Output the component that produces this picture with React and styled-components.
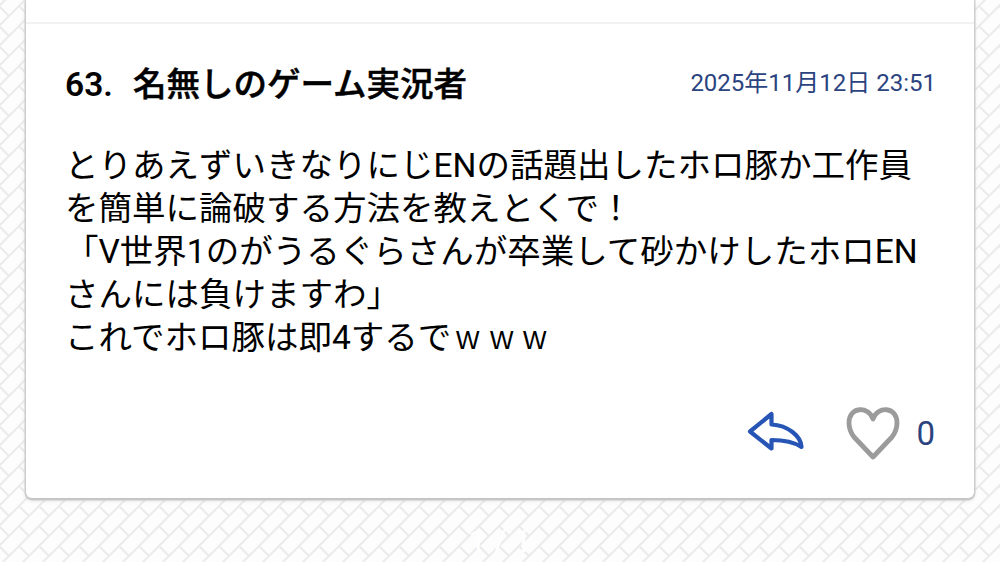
import React from 'react';
import styled, { createGlobalStyle } from 'styled-components';

const lines = [
    'とりあえずいきなりにじENの話題出したホロ豚か工作員',
    'を簡単に論破する方法を教えとくで！',
    '「V世界1のがうるぐらさんが卒業して砂かけしたホロEN',
    'さんには負けますわ」',
    'これでホロ豚は即4するでｗｗｗ'
];

// full-width w is drawn narrower than its cell
const renderLine = line => line.split(/(ｗ)/).map((part, i) => (
    part === 'ｗ' ? <Laugh key={i}>{part}</Laugh> : part
));

const BrickBackground = () => (
    <Backdrop aria-hidden="true">
        <defs>
            <pattern id="bricks" width="20" height="20" x="-1" y="6" patternUnits="userSpaceOnUse">
                <path
                    d="M-2 22L22 -2M0 0L10 10M-1 1L1 -1M19 21L21 19"
                    fill="none"
                    stroke="#ebebeb"
                    strokeWidth="2"
                />
            </pattern>
        </defs>
        <rect width="100%" height="100%" fill="url(#bricks)" />
    </Backdrop>
);

const App = () => (
    <Page>
        <GlobalStyle />
        <BrickBackground />
        <Card>
            <Previous />
            <Comment>
                <Header>
                    <Name><Number>63.</Number>名無しのゲーム実況者</Name>
                    <Posted>2025年11月12日 23:51</Posted>
                </Header>
                <Body>
                    {lines.map((line, i) => <Line key={i}>{renderLine(line)}</Line>)}
                </Body>
                <Actions>
                    <ReplyIcon viewBox="0 0 58 40">
                        <path d="M3 20.5L24.5 3V13.5C41 14.5 54 25 54.5 36C47 31 37 29 24.5 29V37.5Z" />
                    </ReplyIcon>
                    <HeartIcon viewBox="0 0 54 54">
                        <path d="M27 13C23 0 3 0 3 17C3 23 5 27 8 31L27 51L46 31C49 27 51 23 51 17C51 0 31 0 27 13Z" />
                    </HeartIcon>
                    <Likes>0</Likes>
                </Actions>
            </Comment>
        </Card>
        <PageCount>1 / 1</PageCount>
    </Page>
);

const GlobalStyle = createGlobalStyle`
    body {
        margin: 0;
        overflow: hidden;
        background: #fdfdfd;
        font-family: Roboto, "Noto Sans CJK JP", sans-serif;
    }
`

const Page = styled.div`
    position: relative;
    box-sizing: border-box;
    width: 1000px;
    height: 562px;
    padding: 0 26px;
    overflow: hidden;
`

const Backdrop = styled.svg`
    position: absolute;
    top: 0;
    left: 0;
    width: 100%;
    height: 100%;
`

const Card = styled.div`
    position: relative;
    height: 498px;
    background: #fff;
    border-radius: 0 0 6px 6px;
    box-shadow: 0 2px 5px rgba(0, 0, 0, 0.14), 0 1px 0 1.5px #dadada;
`

const Previous = styled.div`
    height: 22px;
    border-bottom: 2px solid #f2f2f2;
`

const Comment = styled.div`
    padding: 40px 39px 0 39px;
`

const Header = styled.div`
    display: flex;
    justify-content: space-between;
    height: 80px;
`

const Name = styled.div`
    color: #000;
    font-size: 33.5px;
    font-weight: 500;
    line-height: 42px;
    -webkit-text-stroke: 0.5px #000;
`

const Number = styled.span`
    display: inline-block;
    width: 68px;
    font-weight: 600;
    -webkit-text-stroke: 0;
`

const Posted = styled.div`
    margin-right: -1px;
    color: #2b4480;
    font-size: 24px;
    line-height: 38px;
`

const Body = styled.div`
    color: #000;
    font-size: 33.5px;
    line-height: 43px;
    white-space: nowrap;
`

const Line = styled.div`
    height: 43px;
`

const Laugh = styled.span`
    display: inline-block;
    line-height: 1;
    transform: scaleX(0.82);
`

const Actions = styled.div`
    display: flex;
    align-items: center;
    justify-content: flex-end;
    height: 60px;
    margin-top: 44px;
`

const ReplyIcon = styled.svg`
    width: 58px;
    height: 40px;
    margin: 0 41px 5px 0;
    fill: none;
    stroke: #2655b5;
    stroke-width: 4.2;
    stroke-linejoin: round;
`

const HeartIcon = styled.svg`
    width: 54px;
    height: 54px;
    margin-right: 16px;
    fill: none;
    stroke: #9b9b9b;
    stroke-width: 4.8;
    stroke-linejoin: round;
`

const Likes = styled.div`
    color: #2b4480;
    font-size: 33px;
`

const PageCount = styled.div`
    position: relative;
    margin-top: 24px;
    color: #fff;
    font-size: 31px;
    line-height: 40px;
    text-align: center;
`

export default App;
